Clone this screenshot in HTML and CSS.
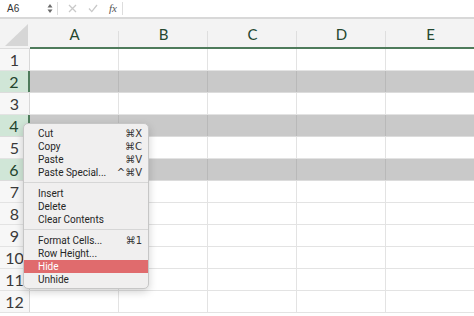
FILE: index.html
```html
<!DOCTYPE html>
<html lang="en">
<head>
    <meta charset="UTF-8">
    <title>Sheet - Hide Rows</title>
    <link rel="stylesheet" href="styles.css">
</head>
<body>
    <div class="formula-bar">
        <div class="name-box">
            <span>A6</span>
            <svg class="stepper" width="6" height="11" viewBox="0 0 6 11">
                <path d="M3 1 L5.5 4.5 L0.5 4.5 Z" fill="#6a6a6a"/>
                <path d="M3 10 L5.5 6.5 L0.5 6.5 Z" fill="#6a6a6a"/>
            </svg>
        </div>
        <div class="fb-tools">
            <svg width="9" height="9" viewBox="0 0 9 9">
                <path d="M1 1 L8 8 M8 1 L1 8" stroke="#c9c9c9" stroke-width="1.3" fill="none"/>
            </svg>
            <svg width="10" height="9" viewBox="0 0 10 9">
                <path d="M1 4.5 L3.8 7.6 L9 1" stroke="#c9c9c9" stroke-width="1.3" fill="none"/>
            </svg>
            <span class="fx">fx</span>
        </div>
        <div class="fb-input"></div>
    </div>

    <div class="sheet">
        <div class="row head">
            <div class="corner">
                <svg width="23" height="22" viewBox="0 0 23 22"><path d="M23 0 L23 22 L0 22 Z" fill="#d6d6d6"/></svg>
            </div>
            <div class="col">A</div>
            <div class="col">B</div>
            <div class="col">C</div>
            <div class="col">D</div>
            <div class="col">E</div>
        </div>
        <div class="row"><div class="rh">1</div><div class="c"></div><div class="c"></div><div class="c"></div><div class="c"></div><div class="c"></div></div>
        <div class="row sel"><div class="rh">2</div><div class="c"></div><div class="c"></div><div class="c"></div><div class="c"></div><div class="c"></div></div>
        <div class="row"><div class="rh">3</div><div class="c"></div><div class="c"></div><div class="c"></div><div class="c"></div><div class="c"></div></div>
        <div class="row sel"><div class="rh">4</div><div class="c"></div><div class="c"></div><div class="c"></div><div class="c"></div><div class="c"></div></div>
        <div class="row"><div class="rh">5</div><div class="c"></div><div class="c"></div><div class="c"></div><div class="c"></div><div class="c"></div></div>
        <div class="row sel"><div class="rh">6</div><div class="c"></div><div class="c"></div><div class="c"></div><div class="c"></div><div class="c"></div></div>
        <div class="row"><div class="rh">7</div><div class="c"></div><div class="c"></div><div class="c"></div><div class="c"></div><div class="c"></div></div>
        <div class="row"><div class="rh">8</div><div class="c"></div><div class="c"></div><div class="c"></div><div class="c"></div><div class="c"></div></div>
        <div class="row"><div class="rh">9</div><div class="c"></div><div class="c"></div><div class="c"></div><div class="c"></div><div class="c"></div></div>
        <div class="row"><div class="rh">10</div><div class="c"></div><div class="c"></div><div class="c"></div><div class="c"></div><div class="c"></div></div>
        <div class="row"><div class="rh">11</div><div class="c"></div><div class="c"></div><div class="c"></div><div class="c"></div><div class="c"></div></div>
        <div class="row"><div class="rh">12</div><div class="c"></div><div class="c"></div><div class="c"></div><div class="c"></div><div class="c"></div></div>
    </div>

    <div class="menu">
        <div class="item"><span>Cut</span><span class="key">⌘X</span></div>
        <div class="item"><span>Copy</span><span class="key">⌘C</span></div>
        <div class="item"><span>Paste</span><span class="key">⌘V</span></div>
        <div class="item"><span>Paste Special...</span><span class="key">^⌘V</span></div>
        <div class="sep"></div>
        <div class="item"><span>Insert</span></div>
        <div class="item"><span>Delete</span></div>
        <div class="item"><span>Clear Contents</span></div>
        <div class="sep"></div>
        <div class="item"><span>Format Cells...</span><span class="key">⌘1</span></div>
        <div class="item"><span>Row Height...</span></div>
        <div class="item active"><span>Hide</span></div>
        <div class="item"><span>Unhide</span></div>
    </div>
</body>
</html>
```

FILE: styles.css
```css
body {
    margin: 0;
    width: 474px;
    height: 316px;
    overflow: hidden;
    background-color: #ffffff;
    font-family: 'Lato', 'Liberation Sans', sans-serif;
    position: relative;
}

.formula-bar {
    display: flex;
    align-items: center;
    height: 17px;
    background-color: #ffffff;
    border-bottom: 2px solid #d8d8d8;
}

.name-box {
    display: flex;
    align-items: center;
    justify-content: space-between;
    width: 58px;
    height: 13px;
    padding: 0 4px 0 7px;
    box-sizing: border-box;
    border-right: 1px solid #dddddd;
    font-family: 'Liberation Sans', sans-serif;
    font-size: 10px;
    color: #333;
}

.fb-tools {
    display: flex;
    align-items: center;
    gap: 11px;
    height: 13px;
    padding: 0 5px 0 10px;
    border-right: 1px solid #dddddd;
}

.fx {
    font-family: 'Liberation Serif', serif;
    font-style: italic;
    font-size: 11px;
    color: #555;
    line-height: 13px;
}

.fb-input {
    flex: 1;
}

.row {
    display: flex;
    height: 22px;
    box-sizing: border-box;
    border-bottom: 1px solid #e3e3e3;
}

.row.head {
    height: 30px;
    background-color: #f3f3f3;
    border-bottom: none;
}

.corner {
    display: flex;
    align-items: flex-end;
    justify-content: flex-end;
    width: 30px;
    flex-shrink: 0;
    box-sizing: border-box;
    padding: 0 2px 2px 0;
    border-bottom: 1px solid #dcdcdc;
}

.col {
    position: relative;
    width: 89px;
    flex-shrink: 0;
    box-sizing: border-box;
    border-bottom: 2px solid #4e7b5b;
    text-align: center;
    font-size: 15px;
    line-height: 30px;
    color: #24472f;
}

.col::after {
    content: "";
    position: absolute;
    right: 0;
    top: 12px;
    bottom: 0;
    width: 1px;
    background-color: #dedede;
}

.rh {
    width: 30px;
    flex-shrink: 0;
    box-sizing: border-box;
    background-color: #f7f7f7;
    border-right: 1px solid #d8d8d8;
    text-align: center;
    font-size: 16px;
    line-height: 22px;
    color: #3a3a3a;
}

.c {
    width: 89px;
    flex-shrink: 0;
    box-sizing: border-box;
    border-right: 1px solid #e3e3e3;
}

.row.sel {
    border-bottom-color: #dcdcdc;
}

.row.sel .rh {
    background-color: #d0e6d7;
    border-right: 2px solid #4e7b5b;
    color: #23442d;
}

.row.sel .c {
    background-color: #c9c9c9;
    border-right-color: #b9b9b9;
}

.menu {
    position: absolute;
    left: 23px;
    top: 123px;
    width: 126px;
    box-sizing: border-box;
    padding: 3px 0 2px;
    background-color: #f0efef;
    border: 1px solid #c6c6c6;
    border-radius: 5px;
    box-shadow: 0 3px 9px rgba(0, 0, 0, 0.18);
    font-family: 'Roboto', 'Liberation Sans', sans-serif;
    font-size: 10px;
    color: #262626;
}

.item {
    display: flex;
    justify-content: space-between;
    height: 13px;
    line-height: 13px;
    padding: 0 6px 0 14px;
}

.item .key {
    font-family: 'DejaVu Sans', sans-serif;
    font-size: 10px;
    color: #333;
}

.item.active {
    background-color: #e06b6d;
    color: #ffffff;
}

.sep {
    height: 1px;
    margin: 3px 0 4px;
    background-color: #d6d6d6;
}
```
